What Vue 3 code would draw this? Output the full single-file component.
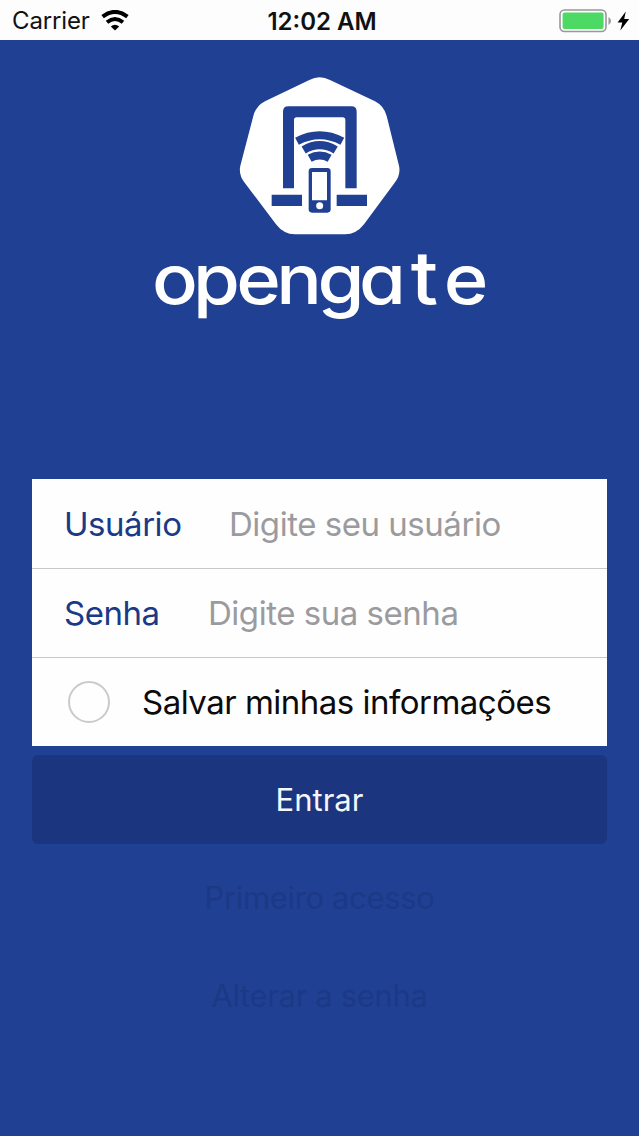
<script setup>
import { ref } from 'vue'

const user = ref('')
const password = ref('')
const remember = ref(false)
</script>

<template>
  <div class="screen">
    <header class="status">
      <div class="carrier">
        <span class="carrier-name">Carrier</span>
        <svg class="wifi" viewBox="0 0 28 21" width="28" height="21" aria-hidden="true">
          <g fill="none" stroke="#000" stroke-width="4">
            <path d="M1.6 6.600Q14-2.800 26.400 6.600" />
            <path d="M6 12.200Q14 5.800 22 12.200" />
          </g>
          <path d="M9.800 16.600Q14 13 18.200 16.600L14 20.600Z" />
        </svg>
      </div>
      <span class="clock">12:02 AM</span>
      <div class="power">
        <svg viewBox="0 0 72 24" width="72" height="24" aria-hidden="true">
          <rect x="1" y="1" width="46" height="21.5" rx="4.5" fill="#fff" stroke="#98989b" stroke-width="1.6" />
          <rect x="3.6" y="3.6" width="41" height="16.4" rx="2" fill="#4cd964" />
          <path d="M49.5 8Q52 9.500 52 12T49.5 16Z" fill="#98989b" />
          <path d="M66.800 2.600L58.600 13.400H63.300L61.300 21.400L70.200 10H65.200Z" fill="#000" />
        </svg>
      </div>
    </header>

    <div class="brand">
      <svg class="emblem" viewBox="0 0 540 525" width="180" height="175" aria-hidden="true">
        <path fill="#fff" d="M238 30Q269 13 300 30L435 94Q462 108 470 138L507 287Q513 315 494 338L402 463Q379 493 345 493H195Q161 493 138 463L44 338Q25 315 31 287L70 138Q78 108 105 94Z" />
        <g fill="#204094">
          <path d="M159 355V125Q159 109 175 109H364Q380 109 380 125V355H346V150Q346 142 338 142H200Q192 142 192 150V355Z" />
          <path d="M125 374H216V408H125ZM320 374H411V408H320Z" />
          <path fill-rule="evenodd" d="M246 294H292Q302 294 302 304V418Q302 428 292 428H246Q236 428 236 418V304Q236 294 246 294ZM246 306V391H291V306ZM269 397A10.500 10.500 0 1 0 269 418A10.500 10.500 0 1 0 269 397Z" />
        </g>
        <g fill="none" stroke="#204094" stroke-width="24">
          <path d="M201 214Q269 178 337 214" />
          <path d="M221 240Q269 211 317 240" />
          <path d="M239 265Q269 248 299 265" />
        </g>
      </svg>
      <svg class="wordmark" viewBox="0 0 340 110" width="340" height="110">
        <text transform="scale(1.1 1)" x="22.700 60.500 98.600 135.500 173.600 211.400 249.500 287.300" y="58.500">openga<tspan class="tall">t</tspan>e</text>
      </svg>
    </div>

    <form class="login" @submit.prevent>
      <div class="fields">
        <label class="row">
          <span class="label user">Usuário</span>
          <input v-model="user" class="input user-input" type="text" placeholder="Digite seu usuário" />
        </label>
        <label class="row">
          <span class="label pass">Senha</span>
          <input v-model="password" class="input pass-input" type="password" placeholder="Digite sua senha" />
        </label>
        <label class="row">
          <input v-model="remember" class="radio" type="checkbox" />
          <span class="remember">Salvar minhas informações</span>
        </label>
      </div>
      <button class="enter" type="submit">Entrar</button>
    </form>

    <nav class="links">
      <a class="first">Primeiro acesso</a>
      <a class="change">Alterar a senha</a>
    </nav>
  </div>
</template>

<style>
body {
  margin: 0;
  background: #204094;
}
</style>

<style scoped>
.screen {
  box-sizing: border-box;
  width: 639px;
  height: 1136px;
  overflow: hidden;
  background: #204094;
  font-family: Inter, "Liberation Sans", sans-serif;
  display: flex;
  flex-direction: column;
}
.status {
  box-sizing: border-box;
  height: 40px;
  background: #fdfdfd;
  display: grid;
  grid-template-columns: 1fr auto 1fr;
  align-items: center;
  padding: 1px 8px 0 12px;
  color: #111;
}
.carrier {
  display: flex;
  align-items: center;
  gap: 11px;
}
.carrier-name {
  font-size: 24px;
  line-height: 30px;
  letter-spacing: -0.15px;
}
.clock {
  font-size: 24px;
  line-height: 30px;
  font-weight: 600;
  padding: 2px 0 0 1px;
}
.power {
  display: flex;
  justify-content: flex-end;
}
.brand {
  display: flex;
  flex-direction: column;
  align-items: center;
  padding-top: 30px;
  height: 409px;
}
.emblem {
  display: block;
}
.wordmark {
  display: block;
  overflow: visible;
}
.wordmark text {
  font-family: Inter, "Liberation Sans", sans-serif;
  font-feature-settings: "cv11" 1;
  font-weight: 500;
  font-size: 69px;
  text-anchor: middle;
  fill: #fff;
}
.wordmark .tall {
  font-size: 73px;
}
.login {
  margin: 0 32px;
}
.fields {
  background: #fefefe;
}
.row {
  box-sizing: border-box;
  height: 89px;
  display: flex;
  align-items: center;
  padding: 0 32px;
}
.row + .row {
  border-top: 1px solid #c8c7cc;
}
.label,
.input,
.remember {
  font-family: inherit;
  font-size: 33px;
  line-height: 40px;
  letter-spacing: -0.47px;
  white-space: nowrap;
}
.label {
  color: #1b3a86;
}
.user {
  width: 165px;
}
.pass {
  width: 144px;
}
.input {
  flex: 1;
  min-width: 0;
  height: 44px;
  padding: 0;
  border: 0;
  outline: 0;
  background: transparent;
  color: #000;
}
.input::placeholder {
  color: #9b9b9e;
  opacity: 1;
}
.radio {
  appearance: none;
  box-sizing: border-box;
  width: 42px;
  height: 42px;
  margin: 0 32px 0 4px;
  border: 2px solid #cbc9ce;
  border-radius: 50%;
}
.remember {
  color: #0b0b0b;
  letter-spacing: -0.51px;
}
.enter {
  display: block;
  width: 100%;
  height: 89px;
  margin: 9px 0 0;
  padding: 0;
  border: 0;
  border-radius: 6px;
  background: #1b367e;
  color: #f4f7ff;
  font-family: inherit;
  font-size: 31px;
  line-height: 40px;
}
.links {
  display: flex;
  flex-direction: column;
  align-items: center;
  gap: 58px;
  padding-top: 34px;
}
.links a {
  color: #1b3985;
  font-size: 31px;
  line-height: 40px;
  letter-spacing: -0.35px;
  white-space: nowrap;
}
</style>
